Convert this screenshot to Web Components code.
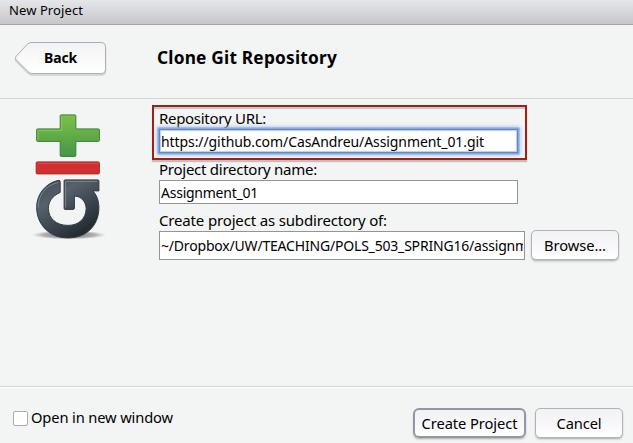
<!DOCTYPE html>
<html lang="en">
<head>
<meta charset="utf-8">
<title>New Project</title>
<style>
html,body{margin:0;height:100%;overflow:hidden}
body{font-family:"Noto Sans","Open Sans",sans-serif;color:#000;background:#f3f5f5}
</style>
</head>
<body>
<project-dialog></project-dialog>
<script>
const define = (name, html, ready) => {
  const t = document.createElement('template');
  t.innerHTML = html;
  customElements.define(name, class extends HTMLElement {
    connectedCallback() {
      if (this.shadowRoot) return;
      this.attachShadow({mode: 'open'}).append(t.content.cloneNode(true));
      if (ready) ready(this, this.shadowRoot);
    }
  });
};

// A single line of text tracked to span the given width.
define('tracked-text', `<style>
:host{display:inline-block;white-space:pre;flex:none}
span{display:inline-block}
</style><span><slot></slot></span>`, (el, root) => {
  const s = root.querySelector('span');
  const w = s.getBoundingClientRect().width;
  const gap = (Number(el.getAttribute('span')) - w) / el.textContent.length;
  s.style.letterSpacing = gap.toFixed(3) + 'px';
});

define('title-bar', `<style>
:host{display:flex;box-sizing:border-box;height:25px;padding-left:9px;align-items:flex-start;
background:linear-gradient(#e5e6ea,#c7c7ca);border-bottom:1px solid #a4a4a7;font-size:13px;line-height:21px}
</style><slot></slot>`);

define('back-button', `<style>
:host{display:grid;width:94px;height:36px}
svg,div{grid-area:1/1}
svg{overflow:visible}
div{padding-left:30px;font-weight:700;font-size:14px;line-height:32px}
</style>
<svg width="94" height="36" viewBox="0 0 94 36">
<defs><linearGradient id="b" x2="0" y2="1"><stop stop-color="#f3f3f5"/><stop offset="1" stop-color="#fff"/></linearGradient></defs>
<path d="M17 2.5H87Q91.5 2.5 91.5 7V29Q91.5 33 87 33H18Q16 33 14 31L2 19Q1 17.5 2 16L13 4Q15 2.5 17 2.5Z" fill="none" stroke="#ccced0" stroke-width="1.5"/>
<path d="M17 .5H87Q91.5 .5 91.5 5V27Q91.5 31.5 87 31.5H18Q16 31.5 14 29.5L2 17.5Q1 16 2 14.5L13 2.5Q15 .5 17 .5Z" fill="url(#b)" stroke="#acaeb9"/>
</svg><div><slot></slot></div>`);

define('page-header', `<style>
:host{display:flex;box-sizing:border-box;height:74px;padding:17px 0 0 14px;border-bottom:1px solid #d3d5d5}
h1{margin:0 0 0 49px;font-size:17.3px;line-height:31px;font-weight:700}
</style><slot name="back"></slot><h1><slot></slot></h1>`);

define('git-logo', `<style>:host{display:block;width:80px;height:132px}</style>
<svg width="80" height="132" viewBox="-.8 -.4 81.6 132" preserveAspectRatio="none">
<defs>
<linearGradient id="g" x2="0" y2="1"><stop stop-color="#7fc04a"/><stop offset="1" stop-color="#459744"/></linearGradient>
<linearGradient id="k" x2=".7" y2="1"><stop stop-color="#3d4850"/><stop offset=".35" stop-color="#56616b"/><stop offset="1" stop-color="#20272e"/></linearGradient>
<radialGradient id="s"><stop stop-color="#555" stop-opacity=".9"/><stop offset=".7" stop-color="#777" stop-opacity=".55"/><stop offset="1" stop-color="#999" stop-opacity="0"/></radialGradient>
</defs>
<ellipse cx="40" cy="125.500" rx="38" ry="4.500" fill="url(#s)"/>
<path d="M32 5.500H46Q47 5.500 47 6.500V19.500H70Q71 19.500 71 20.500V31Q71 32 70 32H47V46Q47 47 46 47H32Q31 47 31 46V32H8Q7 32 7 31V20.500Q7 19.500 8 19.500H31V6.500Q31 5.500 32 5.500Z" fill="url(#g)" stroke="#35843a"/>
<path d="M32.500 7V21H8.500V30.500" fill="none" stroke="#8fc866" stroke-width=".8"/>
<rect x="6.500" y="52.500" width="64.500" height="12" rx="1" fill="#d32f31" stroke="#a8292c"/>
<path d="M8 54H70" stroke="#e46462" stroke-width=".7"/>
<path d="M29 71Q31 70.500 31 72.500V83C22 87 19 93 19 99C19 109 27 116 39 116C50 116 57.500 109 57.500 99C57.500 93 53 87 45.500 86.500V98.500Q45.500 100 44 100H36Q35 100 35 99V71.500Q35 70.500 36 70.500H69.500Q70.500 70.500 70.500 71.500V81.500H64.500C69 87 70.500 92 70.500 99C70 117 57 128.500 39 128.500C20 128.500 7 115 7 98C7 84 17 73.500 29 71Z" fill="url(#k)" stroke="#303940"/>
<path d="M36.500 98V72H69M29 73C16 76 8.500 86 8.500 98" fill="none" stroke="#89929a" stroke-width=".8"/>
</svg>`);

define('form-field', `<style>
:host{display:block}
label{display:block;font-size:15px;line-height:19px;height:20px}
.row{display:flex;gap:6px;align-items:center}
.box{display:block;box-sizing:border-box;width:359px;height:24px;border:1px solid #949596;background:#fff;padding-left:1px;font-size:14px;line-height:23px;overflow:hidden;white-space:nowrap}
:host([wide]) .box{width:366px;height:29px;line-height:28px}
:host([wide]) .clip{display:block;overflow:hidden;margin-right:1px}
:host([focused]) .box{border-color:#6387bd;box-shadow:0 0 0 1.5px #83a9de,0 0 4px 2px #a5c0e6,inset 0 0 1px 1px #b7cdec}
::slotted(push-button){margin:-2px 0 0}
</style><label><slot name="label"></slot></label><div class="row"><div class="box"><span class="clip"><slot></slot></span></div><slot name="action"></slot></div>`);

define('push-button', `<style>
:host{display:flex;box-sizing:border-box;width:88px;height:30px;border:1px solid #b0b2b7;border-radius:5px;
background:linear-gradient(#f2f2f5,#f9f9fb 60%,#fff);box-shadow:0 1px 1px #b9bbbd,0 2px 2px #d9dbdb;justify-content:center;font-size:14.7px;line-height:28px;flex:none}
:host([primary]){width:113px;border:2px solid #9496a5;border-radius:6px;line-height:26px}
</style><slot></slot>`);

define('check-option', `<style>
:host{display:flex;gap:3px;align-items:center;font-size:14.7px;line-height:20px}
i{box-sizing:border-box;width:15px;height:15px;border:1px solid #aaacad;border-radius:2px;background:#fff}
::slotted(*){margin-top:-2px}
</style><i></i><slot></slot>`);

define('callout-frame', `<style>
:host{position:absolute;left:-7px;top:-4px;width:375px;height:55px;box-sizing:border-box;border:2px solid #9e2018;pointer-events:none;
box-shadow:0 2px 1px #bfc0c0,inset 0 2px 1px #c6c6c6}
</style>`);

define('dialog-footer', `<style>
:host{display:flex;box-sizing:border-box;height:57px;padding:21px 10px 0 13px;gap:9px;align-items:flex-start;border-top:1px solid #d3d5d5;box-shadow:inset 0 1px #fff}
::slotted(check-option){margin:1px auto 0 0}
</style><slot></slot>`);

define('project-dialog', `<style>
:host{display:flex;flex-direction:column;width:633px;height:443px;background:#f3f5f4}
main{flex:1;display:flex;padding:10px 0 0 29px;gap:50px}
form{position:relative;display:flex;flex-direction:column;gap:7px}
</style>
<title-bar><tracked-text span="74">New Project</tracked-text></title-bar>
<page-header><back-button slot="back"><tracked-text span="33">Back</tracked-text></back-button><tracked-text span="180">Clone Git Repository</tracked-text></page-header>
<main>
<git-logo></git-logo>
<form>
<form-field focused><tracked-text slot="label" span="107">Repository URL:</tracked-text><tracked-text span="323">https://github.com/CasAndreu/Assignment_01.git</tracked-text></form-field>
<form-field><tracked-text slot="label" span="158">Project directory name:</tracked-text><tracked-text span="97">Assignment_01</tracked-text></form-field>
<form-field wide><tracked-text slot="label" span="228">Create project as subdirectory of:</tracked-text><tracked-text span="367">~/Dropbox/UW/TEACHING/POLS_503_SPRING16/assignm</tracked-text><push-button slot="action"><tracked-text span="62">Browse...</tracked-text></push-button></form-field>
<callout-frame></callout-frame>
</form>
</main>
<dialog-footer><check-option><tracked-text span="142">Open in new window</tracked-text></check-option><push-button primary><tracked-text span="96">Create Project</tracked-text></push-button><push-button><tracked-text span="45">Cancel</tracked-text></push-button></dialog-footer>`);
</script>
</body>
</html>
